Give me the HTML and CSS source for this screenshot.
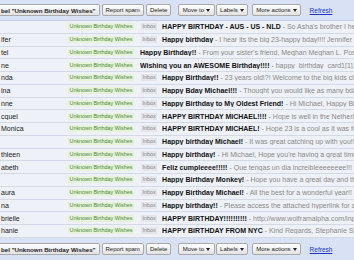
FILE: index.html
```html
<!DOCTYPE html>
<html lang="en">
<head>
  <meta charset="UTF-8">
  <meta name="viewport" content="width=device-width, initial-scale=1.0">
  <title>Unknown Birthday Wishes</title>
  <link rel="stylesheet" href="styles.css">
</head>
<body>
  <div class="mail">
    <div class="toolbar">
      <button class="btn btn-strong">bel "Unknown Birthday Wishes"</button>
      <button class="btn">Report spam</button>
      <button class="btn">Delete</button>
      <button class="btn menu joined">Move to <svg width="4" height="3" viewBox="0 0 4 3"><path d="M0 0h4L2 3z"/></svg></button>
      <button class="btn menu">Labels <svg width="4" height="3" viewBox="0 0 4 3"><path d="M0 0h4L2 3z"/></svg></button>
      <button class="btn menu more">More actions <svg width="4" height="3" viewBox="0 0 4 3"><path d="M0 0h4L2 3z"/></svg></button>
      <a class="refresh" href="#">Refresh</a>
    </div>

    <ul class="threads">
      <li class="thread">
        <span class="sender"></span>
        <span class="label">Unknown Birthday Wishes</span>
        <span class="inbox">Inbox</span>
        <span class="subject"><b>HAPPY BIRTHDAY - AUS - US - NLD</b> - So Asha's brother I heard it was your birthday</span>
      </li>
      <li class="thread">
        <span class="sender">ifer</span>
        <span class="label">Unknown Birthday Wishes</span>
        <span class="inbox">Inbox</span>
        <span class="subject"><b>Happy birthday</b> - I hear its the big 23-happy bday!!!! Jennifer Kaplan</span>
      </li>
      <li class="thread">
        <span class="sender">tel</span>
        <span class="label">Unknown Birthday Wishes</span>
        <span class="subject"><b>Happy Birthday!!</b> - From your sister's friend, Meghan Meghan L. Postel</span>
      </li>
      <li class="thread">
        <span class="sender">ne</span>
        <span class="label">Unknown Birthday Wishes</span>
        <span class="subject"><b>Wishing you an AWESOME Birthday!!!!</b> - happy_birthday_card1[1].jpg&lt;</span>
      </li>
      <li class="thread">
        <span class="sender">nda</span>
        <span class="label">Unknown Birthday Wishes</span>
        <span class="inbox">Inbox</span>
        <span class="subject"><b>Happy Birthday!!</b> - 23 years old!?! Welcome to the big kids club</span>
      </li>
      <li class="thread">
        <span class="sender">ina</span>
        <span class="label">Unknown Birthday Wishes</span>
        <span class="inbox">Inbox</span>
        <span class="subject"><b>Happy Bday Michael!!!</b> - Thought you would like as many bday wishes</span>
      </li>
      <li class="thread">
        <span class="sender">nne</span>
        <span class="label">Unknown Birthday Wishes</span>
        <span class="inbox">Inbox</span>
        <span class="subject"><b>Happy Birthday to My Oldest Friend!</b> - Hi Michael, Happy Birthday</span>
      </li>
      <li class="thread">
        <span class="sender">cquel</span>
        <span class="label">Unknown Birthday Wishes</span>
        <span class="inbox">Inbox</span>
        <span class="subject"><b>HAPPY BIRTHDAY MICHAEL!!!!</b> - Hope is well in the Netherlands</span>
      </li>
      <li class="thread">
        <span class="sender">Monica</span>
        <span class="label">Unknown Birthday Wishes</span>
        <span class="inbox">Inbox</span>
        <span class="subject"><b>HAPPY BIRTHDAY MICHAEL!</b> - Hope 23 is a cool as it was for me</span>
      </li>
      <li class="thread">
        <span class="sender"></span>
        <span class="label">Unknown Birthday Wishes</span>
        <span class="inbox">Inbox</span>
        <span class="subject"><b>Happy birthday Michael!</b> - It was great catching up with you!! Let</span>
      </li>
      <li class="thread">
        <span class="sender">thleen</span>
        <span class="label">Unknown Birthday Wishes</span>
        <span class="inbox">Inbox</span>
        <span class="subject"><b>Happy birthday!</b> - Hi Michael, Hope you're having a great time in</span>
      </li>
      <li class="thread">
        <span class="sender">abeth</span>
        <span class="label">Unknown Birthday Wishes</span>
        <span class="inbox">Inbox</span>
        <span class="subject"><b>Feliz cumpleeee!!!!!</b> - Que tengas un dia increibleeeeeeee!!! Lizz</span>
      </li>
      <li class="thread">
        <span class="sender"></span>
        <span class="label">Unknown Birthday Wishes</span>
        <span class="inbox">Inbox</span>
        <span class="subject"><b>Happy Birthday Monkey!</b> - Hope you have a great day and that you</span>
      </li>
      <li class="thread">
        <span class="sender">aura</span>
        <span class="label">Unknown Birthday Wishes</span>
        <span class="inbox">Inbox</span>
        <span class="subject"><b>Happy Birthday Michael!</b> - All the best for a wonderful year!! I hope</span>
      </li>
      <li class="thread">
        <span class="sender">na</span>
        <span class="label">Unknown Birthday Wishes</span>
        <span class="inbox">Inbox</span>
        <span class="subject"><b>Happy birthday!!</b> - Please access the attached hyperlink for an important</span>
      </li>
      <li class="thread">
        <span class="sender">brielle</span>
        <span class="label">Unknown Birthday Wishes</span>
        <span class="inbox">Inbox</span>
        <span class="subject"><b>HAPPY BIRTHDAY!!!!!!!!!!</b> - http://www.wolframalpha.com/input/?i=</span>
      </li>
      <li class="thread">
        <span class="sender">hanie</span>
        <span class="label">Unknown Birthday Wishes</span>
        <span class="inbox">Inbox</span>
        <span class="subject"><b>HAPPY BIRTHDAY FROM NYC</b> - Kind Regards, Stephanie Stephens</span>
      </li>
    </ul>

    <div class="toolbar toolbar-bottom">
      <button class="btn btn-strong">bel "Unknown Birthday Wishes"</button>
      <button class="btn">Report spam</button>
      <button class="btn">Delete</button>
      <button class="btn menu joined">Move to <svg width="4" height="3" viewBox="0 0 4 3"><path d="M0 0h4L2 3z"/></svg></button>
      <button class="btn menu">Labels <svg width="4" height="3" viewBox="0 0 4 3"><path d="M0 0h4L2 3z"/></svg></button>
      <button class="btn menu more">More actions <svg width="4" height="3" viewBox="0 0 4 3"><path d="M0 0h4L2 3z"/></svg></button>
      <a class="refresh" href="#">Refresh</a>
    </div>
  </div>
</body>
</html>
```

FILE: styles.css
```css
body {
  margin: 0;
  background-color: #d8e2f4;
  font-family: "Liberation Sans", Arial, sans-serif;
  overflow: hidden;
}
.toolbar {
  display: flex;
  align-items: center;
  height: 20px;
}
.toolbar-bottom {
  height: 23px;
}
.btn {
  display: flex;
  align-items: center;
  gap: 2px;
  height: 12px;
  padding: 0 3px;
  margin-right: 2px;
  font-family: inherit;
  font-size: 6px;
  color: #222;
  background: linear-gradient(#ffffff, #e2e2e2);
  border: 1px solid #a9a9a9;
  border-radius: 2px;
  white-space: nowrap;
}
.btn-strong {
  font-size: 6.2px;
  font-weight: bold;
  padding-left: 1px;
  border-left: none;
  border-radius: 0 2px 2px 0;
}
.btn svg {
  fill: #222;
}
.menu {
  padding: 0 3.5px;
  margin-left: 5px;
}
.joined {
  margin-right: 0;
}
.joined + .menu {
  margin-left: 1px;
}
.more {
  padding: 0 3px;
  margin-left: 2px;
}
.refresh {
  margin-left: 7px;
  font-size: 6.5px;
  color: #2233cc;
}
.threads {
  list-style: none;
  margin: 0;
  padding: 0;
  border-top: 1px solid #c4cee0;
}
.thread {
  display: flex;
  align-items: center;
  box-sizing: border-box;
  height: 12.75px;
  border-bottom: 1px solid #d4dae5;
  background-color: #eef1f7;
  font-size: 7px;
  white-space: nowrap;
  overflow: hidden;
}
.sender {
  flex: none;
  box-sizing: border-box;
  width: 68px;
  padding-left: 1px;
  color: #222;
  overflow: hidden;
}
.label {
  flex: none;
  padding: 0 1.5px;
  margin-right: 6px;
  font-size: 5.4px;
  line-height: 7px;
  color: #4a8c3a;
  background-color: #e6f2d9;
}
.inbox {
  flex: none;
  padding: 0 1.5px;
  margin-left: 1px;
  margin-right: 5px;
  font-size: 5.4px;
  line-height: 7px;
  color: #888;
  background-color: #e3e5ea;
}
.subject {
  color: #8a8a8a;
  overflow: hidden;
}
.subject b {
  color: #111;
}
```
